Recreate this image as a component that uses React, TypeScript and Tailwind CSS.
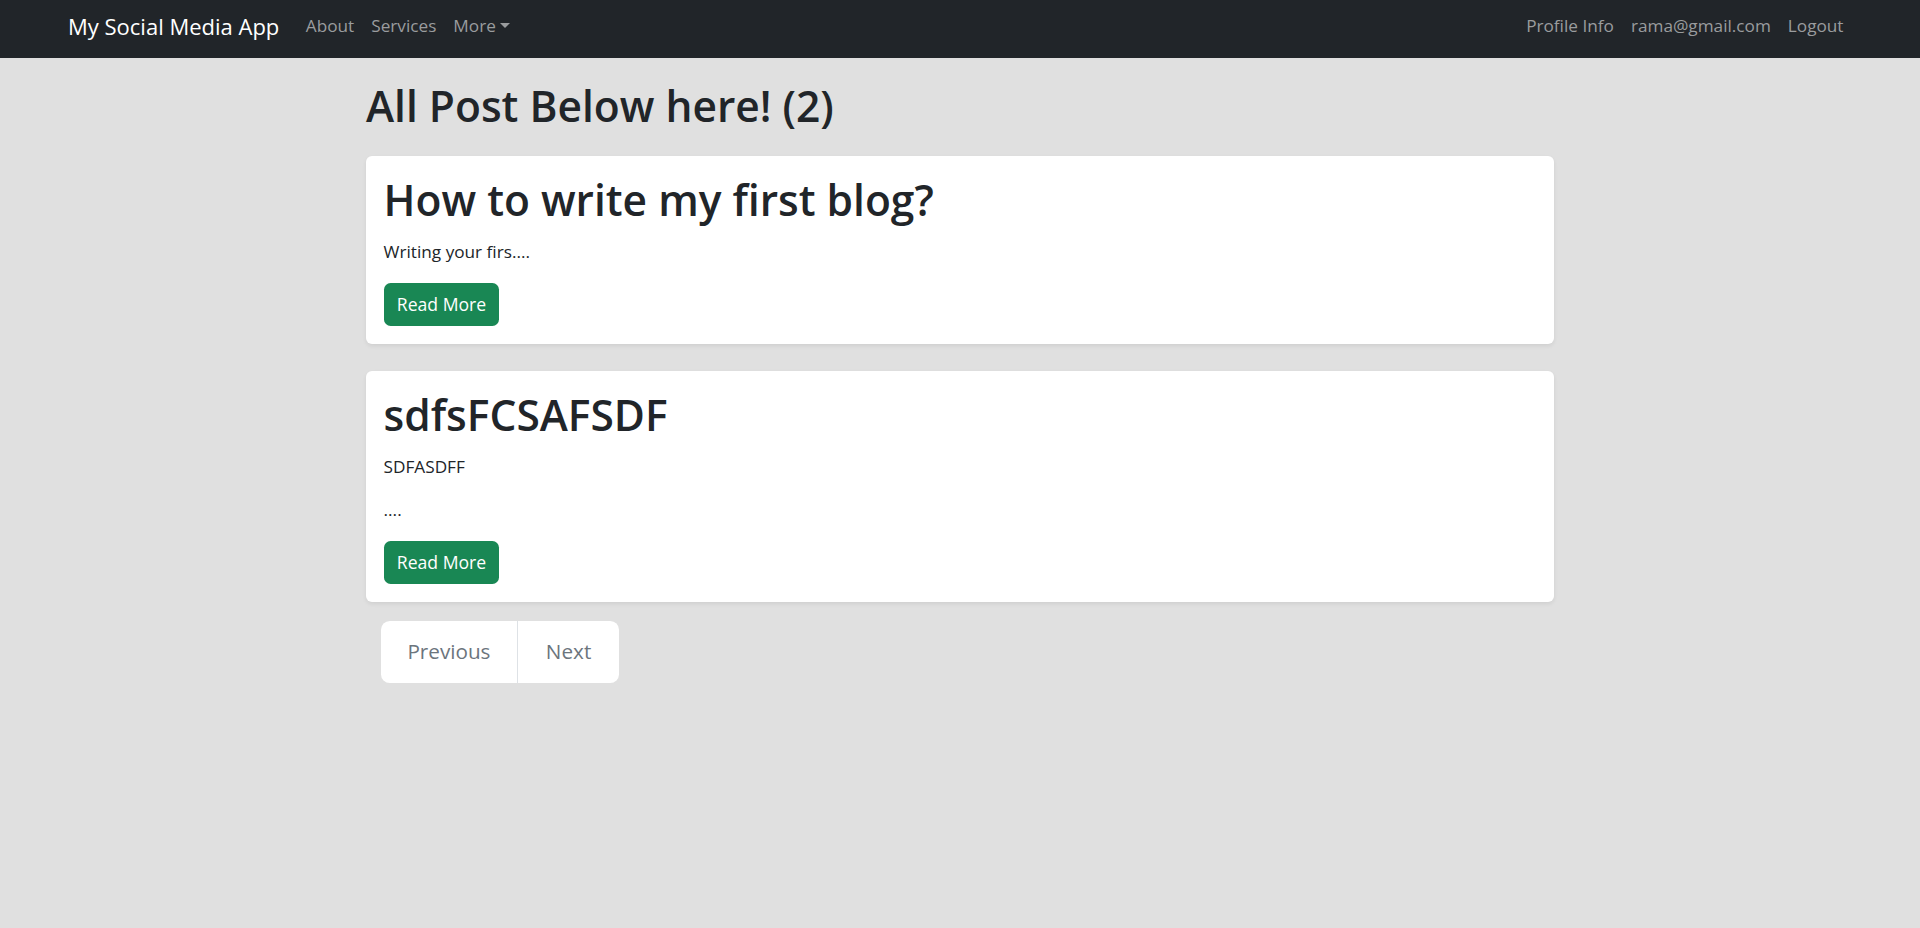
import React from "react";

const posts = [
  { title: "How to write my first blog?", body: ["Writing your firs...."] },
  { title: "sdfsFCSAFSDF", body: ["SDFASDFF", "...."] },
];

function NavLink({ children }: { children: React.ReactNode }) {
  return <a className="px-[8.5px] text-[17.2px] text-[#9a9c9e] cursor-pointer">{children}</a>;
}

export default function App() {
  return (
    <div className="min-h-[928px] bg-[#e0e0e0] text-[#212529] font-['Open_Sans',sans-serif]">
      <nav className="h-[58px] bg-[#212529] flex items-center justify-between pl-[68px] pr-[68px] pb-[6px]">
        <div className="flex items-center">
          <a className="text-[22px] text-white mr-[18px]">My Social Media App</a>
          <NavLink>About</NavLink>
          <NavLink>Services</NavLink>
          <NavLink>
            More
            <span className="inline-block ml-[4.5px] align-[4.5px] border-t-[5.3px] border-x-[5.3px] border-x-transparent border-t-current" />
          </NavLink>
        </div>
        <div className="flex items-center">
          <NavLink>Profile Info</NavLink>
          <NavLink>rama@gmail.com</NavLink>
          <NavLink>Logout</NavLink>
        </div>
      </nav>

      <main className="w-[1188px] mx-auto">
        <h1 className="text-[42.5px] leading-[52.8px] font-semibold pt-[22px] pb-[23px]">All Post Below here! (2)</h1>

        <div className="flex flex-col gap-[27px]">
          {posts.map((p) => (
            <div key={p.title} className="bg-white rounded-[6px] shadow-[0_2px_4px_rgba(0,0,0,0.075)] p-[17.6px]">
              <h2 className="text-[42.5px] leading-[52.8px] font-semibold mb-[12px] mt-[1px]">{p.title}</h2>
              {p.body.map((b, i) => (
                <p key={i} className="text-[17.2px] leading-[26.4px] mb-[17px]">{b}</p>
              ))}
              <button className="bg-[#198754] text-white text-[17.6px] leading-[26.4px] px-[13.2px] py-[8.5px] rounded-[6.6px]">
                Read More
              </button>
            </div>
          ))}
        </div>

        <div className="flex ml-[15px] mt-[19px] w-fit bg-white rounded-[8.8px] text-[20.7px] leading-[33px] text-[#6c757d]">
          <a className="px-[26.4px] py-[14.5px] border-r border-[#dee2e6]">Previous</a>
          <a className="px-[28px] py-[14.5px]">Next</a>
        </div>
      </main>
    </div>
  );
}
